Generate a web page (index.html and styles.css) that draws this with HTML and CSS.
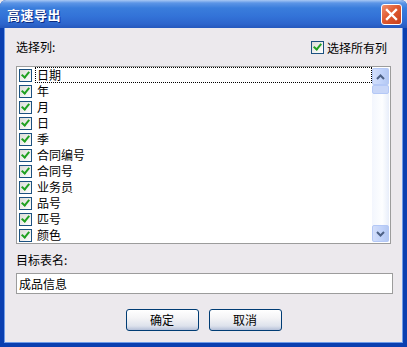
FILE: index.html
```html
<!DOCTYPE html>
<html lang="zh-CN">
<head>
	<meta charset="UTF-8">
	<meta name="viewport" content="width=device-width, initial-scale=1.0">
	<link rel="stylesheet" href="styles.css">
	<title>高速导出</title>
</head>
<body>
	<div class="win">
		<div class="titlebar">
			<span class="title">高速导出</span>
			<span class="close">
				<svg width="13" height="13" viewBox="0 0 13 13"><path d="M2 2L11 11M11 2L2 11" stroke="#fff" stroke-width="2.4" stroke-linecap="square"/></svg>
			</span>
		</div>
		<div class="body">
			<div class="toprow">
				<span class="lbl">选择列:</span>
				<label class="chk all"><span class="box on"></span>选择所有列</label>
			</div>
			<div class="list">
				<div class="items">
					<div class="item focus"><span class="box on"></span><span class="txt">日期</span></div>
					<div class="item"><span class="box on"></span><span class="txt">年</span></div>
					<div class="item"><span class="box on"></span><span class="txt">月</span></div>
					<div class="item"><span class="box on"></span><span class="txt">日</span></div>
					<div class="item"><span class="box on"></span><span class="txt">季</span></div>
					<div class="item"><span class="box on"></span><span class="txt">合同编号</span></div>
					<div class="item"><span class="box on"></span><span class="txt">合同号</span></div>
					<div class="item"><span class="box on"></span><span class="txt">业务员</span></div>
					<div class="item"><span class="box on"></span><span class="txt">品号</span></div>
					<div class="item"><span class="box on"></span><span class="txt">匹号</span></div>
					<div class="item"><span class="box on"></span><span class="txt">颜色</span></div>
				</div>
				<div class="sbar">
					<span class="sbtn"><svg width="9" height="6" viewBox="0 0 9 6"><path d="M1 5L4.5 1.5L8 5" fill="none" stroke="#4d6185" stroke-width="2"/></svg></span>
					<span class="thumb"></span>
					<span class="track"></span>
					<span class="sbtn"><svg width="9" height="6" viewBox="0 0 9 6"><path d="M1 1L4.5 4.5L8 1" fill="none" stroke="#4d6185" stroke-width="2"/></svg></span>
				</div>
			</div>
			<div class="lbl name">目标表名:</div>
			<div class="field">成品信息</div>
			<div class="btns">
				<span class="btn">确定</span>
				<span class="btn">取消</span>
			</div>
		</div>
	</div>
</body>
</html>
```
FILE: styles.css
```css
html,body{
	margin:0;
	padding:0;
	background:#ece9ed;
}
body{
	font-family:"Noto Sans CJK SC", "DejaVu Sans", sans-serif;
	font-size:12px;
	color:#000;
}
.win{
	width:407px;
	height:347px;
	box-sizing:border-box;
	display:flex;
	flex-direction:column;
	background:#0a3fb0;
	border-radius:6px 6px 0 0;
	overflow:hidden;
}
.titlebar{
	height:28px;
	flex:none;
	display:flex;
	align-items:center;
	justify-content:space-between;
	padding:0 5px 0 7px;
	background:linear-gradient(#a8c8f4 0, #5c95e6 3px, #3a7ddc 8px, #3373d8 16px, #2d65cc 24px, #2558bd 28px);
}
.title{
	color:#fff;
	font-weight:bold;
	font-size:13px;
	text-shadow:1px 1px 0 #0b2a80;
	letter-spacing:0.5px;
}
.close{
	width:21px;
	height:21px;
	box-sizing:border-box;
	border:1px solid #fff;
	border-radius:3px;
	background:linear-gradient(135deg,#f09070,#e05a30 45%,#c8401c);
	display:flex;
	align-items:center;
	justify-content:center;
}
.body{
	flex:1;
	margin:0 4px 4px 4px;
	background:#ece9ed;
	padding:10px 11px 0 11px;
	border-left:1px solid #6f9ce8;
	border-right:1px solid #6f9ce8;
	border-bottom:1px solid #6f9ce8;
}
.toprow{
	display:flex;
	justify-content:space-between;
	align-items:center;
	height:18px;
	margin-bottom:10px;
}
.lbl{
	line-height:18px;
}
.chk{
	display:flex;
	align-items:center;
	gap:3px;
	margin-right:4px;
}
.box{
	width:11px;
	height:11px;
	flex:none;
	border:1px solid #1c5180;
	background:linear-gradient(135deg,#dcdcd7,#fff);
	position:relative;
}
.box.on::after{
	content:"";
	position:absolute;
	left:3px;
	top:0px;
	width:3px;
	height:6px;
	border:solid #21a121;
	border-width:0 2px 2px 0;
	transform:rotate(40deg);
}
.list{
	height:178px;
	box-sizing:border-box;
	border:1px solid #9c9c9c;
	background:#fff;
	display:flex;
	padding:0 1px 1px 2px;
}
.items{
	flex:1;
}
.item{
	height:16px;
	display:flex;
	align-items:center;
	gap:3px;
}
.txt{
	flex:1;
	line-height:14px;
	border:1px dotted transparent;
	padding-left:1px;
}
.item.focus .txt{
	border-color:#000;
}
.sbar{
	width:17px;
	margin-top:1px;
	display:flex;
	flex-direction:column;
	background:linear-gradient(90deg,#f3f6fd,#fdfeff 60%,#e8eefa);
}
.sbtn,.thumb{
	box-sizing:border-box;
	border:1px solid #b4c8f6;
	border-radius:2px;
	background:linear-gradient(90deg,#d3defa,#c0d2fa 60%,#b4c8f2);
	display:flex;
	align-items:center;
	justify-content:center;
}
.sbtn{
	height:17px;
}
.thumb{
	height:9px;
	background:#c8d6f8;
}
.track{
	flex:1;
}
.name{
	margin-top:7px;
	margin-bottom:4px;
}
.field{
	height:21px;
	box-sizing:border-box;
	border:1px solid #9c9c9c;
	background:#fff;
	padding-left:2px;
	line-height:19px;
	width:377px;
}
.btns{
	display:flex;
	justify-content:center;
	gap:10px;
	margin-top:15px;
}
.btn{
	width:73px;
	height:22px;
	box-sizing:border-box;
	border:1px solid #003c74;
	border-radius:3px;
	background:linear-gradient(#ffffff,#f4f4f6 40%,#dde2ec 80%,#b4c0d8);
	text-align:center;
	line-height:20px;
}
```
